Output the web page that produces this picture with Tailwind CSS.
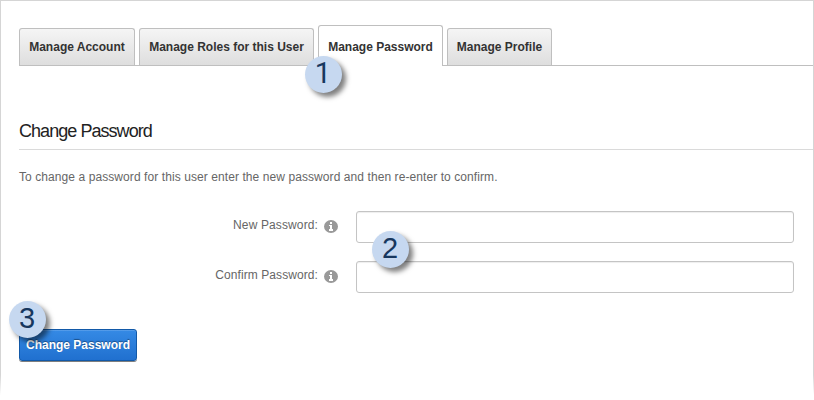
<!DOCTYPE html>
<html lang="en">
<head>
<meta charset="utf-8">
<title>Change Password</title>
<script src="https://cdn.jsdelivr.net/npm/@tailwindcss/browser@4"></script>
</head>
<body class="bg-white font-['Liberation_Sans',Arial,sans-serif] text-[12px] leading-[16px] text-[#666]">
<div class="relative h-[400px] w-[814px] overflow-hidden">
<main class="relative h-[400px] w-[814px] border border-b-0 border-[#d5d5d5] pl-[18px] pt-6">
  <nav class="relative flex h-[41px] items-end gap-1 border-b border-[#bfbfbf] font-bold text-[#333]">
    <a class="flex h-[37px] w-[116px] items-center justify-center rounded-t-[3px] border border-b-0 border-[#bfbfbf] bg-linear-to-b from-[#f5f5f5] to-[#dedede] whitespace-nowrap">Manage Account</a>
    <a class="flex h-[37px] w-[175px] items-center justify-center rounded-t-[3px] border border-b-0 border-[#bfbfbf] bg-linear-to-b from-[#f5f5f5] to-[#dedede] whitespace-nowrap">Manage Roles for this User</a>
    <a class="-mb-px flex h-[41px] w-[125px] items-center justify-center rounded-t-[3px] border border-b-0 border-[#bfbfbf] bg-white pt-[2px] whitespace-nowrap">Manage Password</a>
    <a class="flex h-[37px] w-[105px] items-center justify-center rounded-t-[3px] border border-b-0 border-[#bfbfbf] bg-linear-to-b from-[#f5f5f5] to-[#dedede] whitespace-nowrap">Manage Profile</a>
  </nav>
  <h1 class="mt-[53px] h-[31px] border-b border-[#dadada] text-[18px] leading-[24px] tracking-[-0.95px] text-[#222]">Change Password</h1>
  <p class="mt-[19px] whitespace-nowrap tracking-[0.08px]">To change a password for this user enter the new password and then re-enter to confirm.</p>
  <form class="mt-[26px]">
    <div class="flex h-[32px]">
      <label class="flex w-[299px] justify-end pt-[6px] tracking-[0.12px]">New Password:</label>
      <svg class="ml-[6px] mt-[9px] h-[13px] w-[14px]" viewBox="0 0 14 13"><ellipse cx="7" cy="6.5" rx="7" ry="6.5" fill="#999"/><path d="M6 2h2v2H6zM5 5h3v4h1v2H5V9h1V6H5z" fill="#fff"/></svg>
      <input type="password" class="ml-[18px] h-[32px] w-[438px] rounded-[3px] border border-[#c4c4c4] bg-white shadow-[inset_0_1px_1px_rgba(0,0,0,0.07)]">
    </div>
    <div class="mt-[18px] flex h-[32px]">
      <label class="flex w-[299px] justify-end pt-[6px] tracking-[0.08px]">Confirm Password:</label>
      <svg class="ml-[6px] mt-[9px] h-[13px] w-[14px]" viewBox="0 0 14 13"><ellipse cx="7" cy="6.5" rx="7" ry="6.5" fill="#999"/><path d="M6 2h2v2H6zM5 5h3v4h1v2H5V9h1V6H5z" fill="#fff"/></svg>
      <input type="password" class="ml-[18px] h-[32px] w-[438px] rounded-[3px] border border-[#c4c4c4] bg-white shadow-[inset_0_1px_1px_rgba(0,0,0,0.07)]">
    </div>
    <button type="button" class="mt-[36px] flex h-[32px] w-[118px] items-center justify-center whitespace-nowrap rounded-[3px] border border-[#1259a8] bg-linear-to-b from-[#358ae5] to-[#2070cf] font-bold text-white shadow-[inset_0_1px_0_rgba(255,255,255,0.15),0_1px_0_rgba(0,0,0,0.5)] text-shadow-[0_-1px_1px_rgba(0,0,0,0.4)]">Change Password</button>
  </form>
  <span class="absolute left-[304px] top-[55px] flex size-[37px] items-center justify-center rounded-full bg-[#c6d8f0] pb-[2px] pr-px font-[Roboto,sans-serif] text-[29px] leading-none text-[#17375e] shadow-[4px_4px_5px_rgba(0,0,0,0.5)]">1</span>
  <span class="absolute left-[371px] top-[230px] flex size-[37px] items-center justify-center rounded-full bg-[#c6d8f0] pb-[2px] pr-px text-[29px] leading-none text-[#17375e] shadow-[4px_4px_5px_rgba(0,0,0,0.5)]">2</span>
  <span class="absolute left-[8px] top-[300px] flex size-[37px] items-center justify-center rounded-full bg-[#c6d8f0] pb-[2px] pr-px text-[29px] leading-none text-[#17375e] shadow-[4px_4px_5px_rgba(0,0,0,0.5)]">3</span>
</main>
<div class="absolute inset-x-0 bottom-0 h-[25px] bg-linear-to-b from-white/0 to-white to-80%"></div>
</div>
</body>
</html>
